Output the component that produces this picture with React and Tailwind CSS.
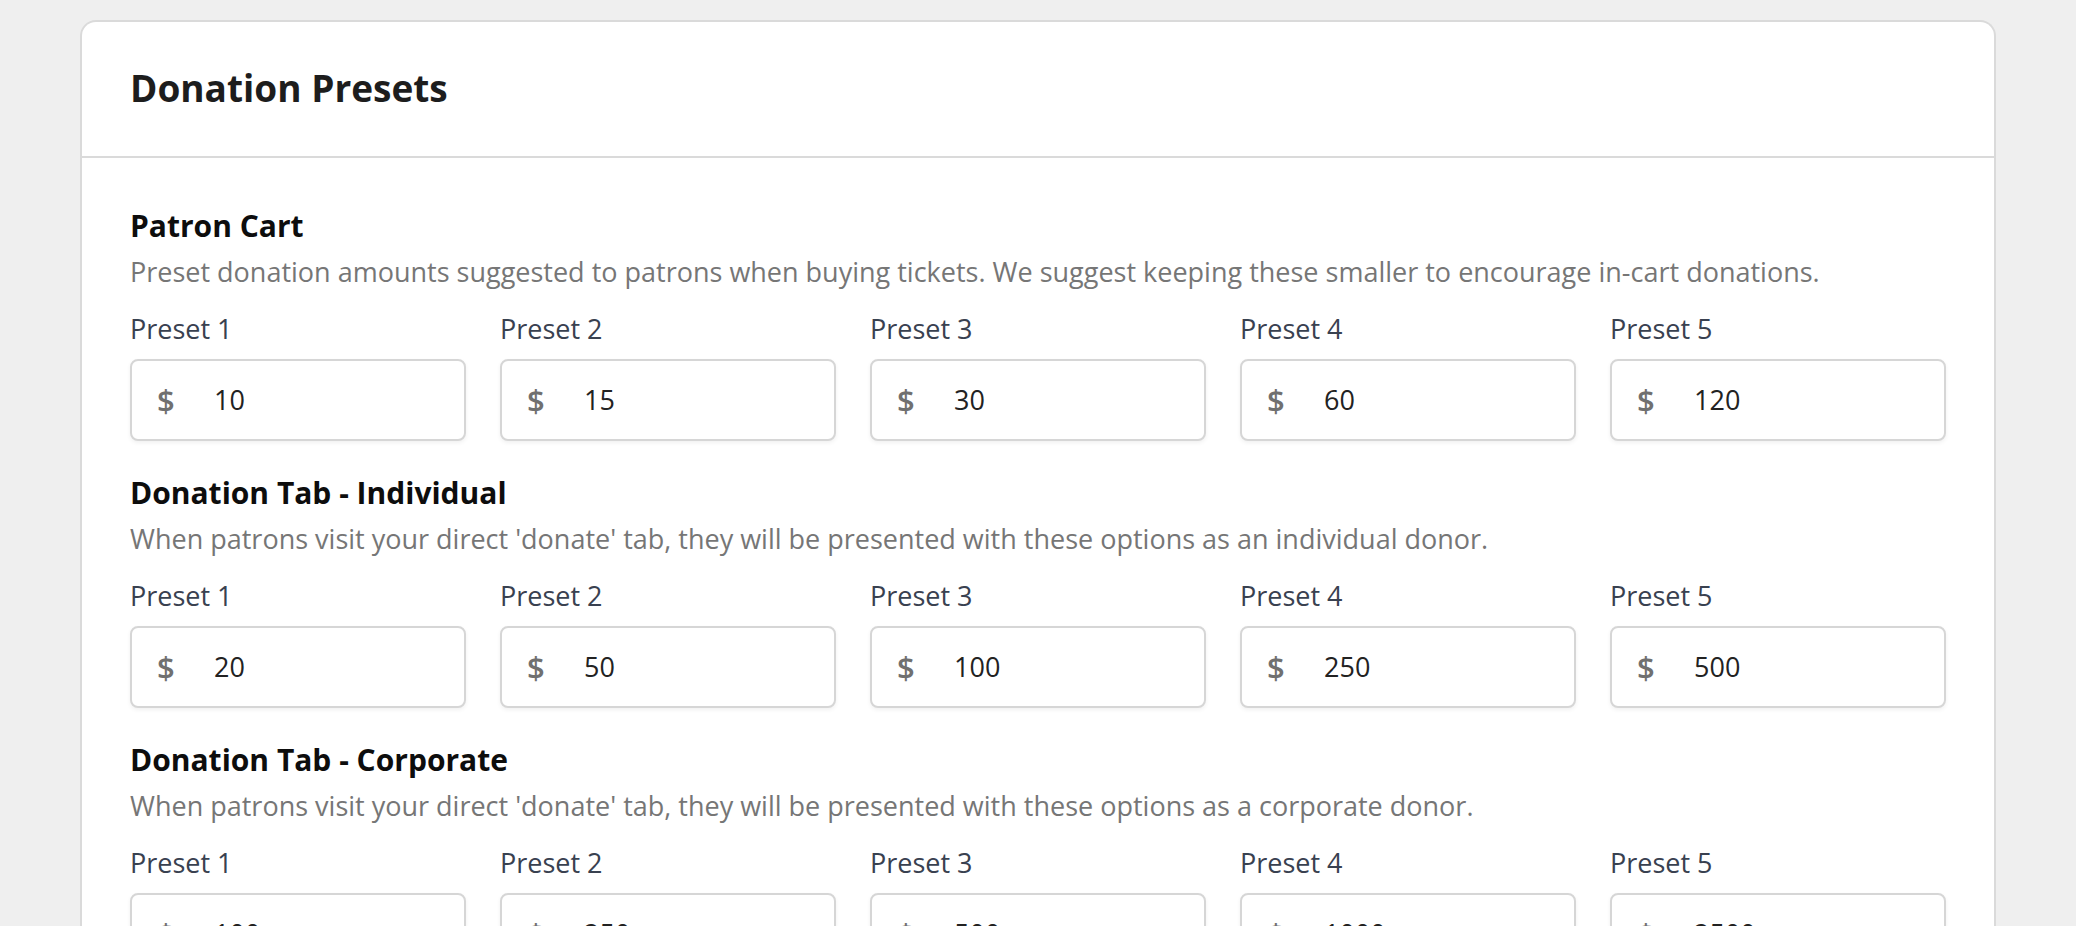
import React from "react";

const SECTIONS = [
  {
    title: "Patron Cart",
    desc: "Preset donation amounts suggested to patrons when buying tickets. We suggest keeping these smaller to encourage in-cart donations.",
    values: ["10", "15", "30", "60", "120"],
  },
  {
    title: "Donation Tab - Individual",
    desc: "When patrons visit your direct 'donate' tab, they will be presented with these options as an individual donor.",
    values: ["20", "50", "100", "250", "500"],
  },
  {
    title: "Donation Tab - Corporate",
    desc: "When patrons visit your direct 'donate' tab, they will be presented with these options as a corporate donor.",
    values: ["100", "250", "500", "1000", "2500"],
  },
];

const PresetInput = ({ label, value }) => (
  <div className="flex flex-col">
    <label className="text-[27px] leading-[40px] text-[#394150]">{label}</label>
    <div className="mt-[10px] h-[82px] flex items-center rounded-[8px] border-2 border-[#d6d6d6] bg-white shadow-[0_2px_4px_rgba(0,0,0,0.06)]">
      <span className="ml-[25px] w-[57px] text-[31px] leading-none font-semibold text-[#707070]">$</span>
      <span className="text-[27px] text-[#222]">{value}</span>
    </div>
  </div>
);

const App = () => {
  return (
    <div className="min-h-screen bg-[#efefef] px-[80px] pt-[20px] font-['Open_Sans',sans-serif]">
      <div className="rounded-t-[16px] border-2 border-b-0 border-[#dadada] bg-white">
        {/* Header */}
        <div className="px-[48px] pt-[42px] pb-[44px] border-b-2 border-[#dadada]">
          <h1 className="text-[37px] leading-[48px] font-bold text-[#1d1d1d]">Donation Presets</h1>
        </div>

        {/* Body */}
        <div className="px-[48px] pt-[48px] pb-[40px] flex flex-col gap-[32px]">
          {SECTIONS.map((s) => (
            <div key={s.title}>
              <h2 className="text-[30px] leading-[40px] font-bold text-[#0d0d0d]">{s.title}</h2>
              <p className="mt-[6px] text-[27px] leading-[40px] text-[#767676]">{s.desc}</p>
              <div className="mt-[17px] grid grid-cols-5 gap-[34px]">
                {s.values.map((v, i) => (
                  <PresetInput key={i} label={`Preset ${i + 1}`} value={v} />
                ))}
              </div>
            </div>
          ))}
        </div>
      </div>
    </div>
  );
};

export default App;
